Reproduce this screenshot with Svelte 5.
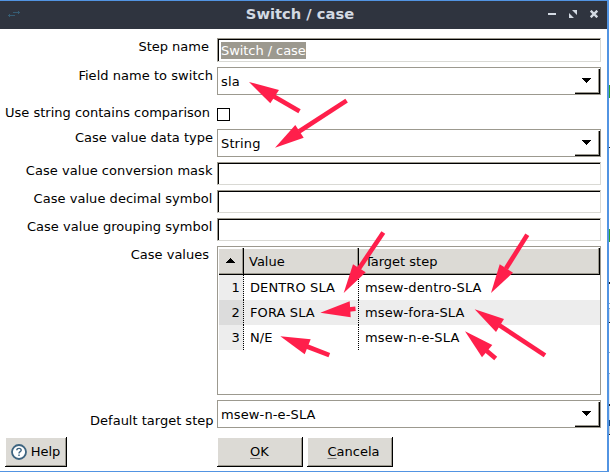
<script>
  const arrows = [
    { head: '249,82 279,90 270.3,103.3', tail: '274,96.5 299.5,111.3' },
    { head: '275,147.7 295.3,125 303.7,137.7', tail: '299,131.5 346.6,100.6' },
    { head: '343.7,293 353,264.3 365.7,272.3', tail: '359,268.5 383.3,232.5' },
    { head: '320.3,312.7 349.7,301.3 350.7,317.3', tail: '349,309.5 355.5,308.8' },
    { head: '280.3,336.3 310.7,339.3 304.7,354.3', tail: '307,346.5 329.3,355.2' },
    { head: '491,293 499.7,264.3 513,272.7', tail: '506,268.5 527.3,234.7' },
    { head: '474.7,309.3 504,319 496,332', tail: '499.5,325.3 545,355.3' },
    { head: '465,331.3 492.3,345 482,357.3', tail: '486.5,350.7 495.7,358.4' }
  ];
  const rows = [
    ['DENTRO SLA', 'msew-dentro-SLA'],
    ['FORA SLA', 'msew-fora-SLA'],
    ['N/E', 'msew-n-e-SLA']
  ];
</script>

{#snippet combo(value)}
  <div class="combo">
    <span>{value}</span>
    <div class="drop"><svg width="9" height="5" shape-rendering="crispEdges"><path d="M0 0h9v1h-1v1h-1v1h-1v1h-1v1h-1v-1h-1v-1h-1v-1h-1v-1h-1z" /></svg></div>
  </div>
{/snippet}

<div class="screen">
  <div class="window">
    <header>
      <svg class="appicon" width="13" height="7" viewBox="0 0 13 7" fill="none" stroke="#365d74"><path d="M5 1.5h7M10.5 0v3M0 4.5h7M1.5 3v3" /></svg>
      <h1>Switch / case</h1>
      <div class="controls">
        <svg width="8" height="8" fill="#d3dae3"><path d="M0 3h8v2H0z" /></svg>
        <svg width="8" height="8" fill="#d3dae3"><path d="M3 0h5v5zM0 3l5 5H0z" /></svg>
        <svg width="8" height="8" stroke="#d3dae3" stroke-width="2.4"><path d="M.7 .7l6.6 6.6M7.3 .7L.7 7.3" /></svg>
      </div>
    </header>
    <main>
      <div class="row name"><span class="label">Step name</span><div class="input"><mark>Switch / case</mark></div></div>
      <div class="row field"><span class="label">Field name to switch</span>{@render combo('sla')}</div>
      <div class="row contains"><span class="label">Use string contains comparison</span><div class="check"></div></div>
      <div class="row type"><span class="label">Case value data type</span>{@render combo('String')}</div>
      <div class="row mask"><span class="label">Case value conversion mask</span><div class="input"></div></div>
      <div class="row symbol"><span class="label">Case value decimal symbol</span><div class="input"></div></div>
      <div class="row symbol"><span class="label">Case value grouping symbol</span><div class="input"></div></div>
      <div class="row values">
        <span class="label">Case values</span>
        <div class="table">
          <div class="thead">
            <div class="th sort"><svg width="9" height="5" shape-rendering="crispEdges"><path d="M4 0h1v1h1v1h1v1h1v1h1v1h-9v-1h1v-1h1v-1h1v-1h1z" /></svg></div>
            <div class="th val">Value</div>
            <div class="th target">Target step</div>
          </div>
          {#each rows as [value, target], i}
            <div class="tr" class:alt={i === 1}>
              <div class="num">{i + 1}</div>
              <div class="value">{value}</div>
              <div class="step">{target}</div>
            </div>
          {/each}
        </div>
      </div>
      <div class="row default"><span class="label">Default target step</span>{@render combo('msew-n-e-SLA')}</div>
      <footer>
        <div class="btn help">
          <svg width="16" height="16" viewBox="0 0 16 16" fill="none" stroke="#3d6480"><circle cx="8" cy="8" r="7" fill="#fff" stroke-width="1.8" /><path d="M5.8 6.2C5.9 3.8 10.2 3.8 10.2 6.2C10.2 7.8 8 7.5 8 9.5M8 10.5v1.5" stroke-width="1.4" /></svg>
          Help
        </div>
        <div class="btn ok"><span><u>O</u>K</span></div>
        <div class="btn cancel"><span><u>C</u>ancela</span></div>
      </footer>
    </main>
  </div>
  <div class="behind"></div>
  <svg class="arrows" width="610" height="472">
    {#each arrows as a}
      <polygon points={a.head} fill="#ff1f4b" />
      <polyline points={a.tail} stroke="#ff1f4b" stroke-width="4.6" fill="none" />
    {/each}
  </svg>
</div>

<style>
  .screen { width: 610px; height: 472px; display: flex; position: relative; overflow: hidden; background: #fff; font: 13px/16px "DejaVu Sans", sans-serif; color: #000; white-space: nowrap; }
  .screen * { box-sizing: border-box; }
  svg { display: block; flex: none; }
  .window { width: 609px; height: 472px; border: solid #5294e2; border-width: 1px 2px 1px 0; }
  header { height: 28px; background: #2f343f; display: flex; align-items: center; padding: 0 9px 0 8px; }
  .appicon { margin-top: -1px; }
  h1 { flex: 1; margin: 0 0 3px 31px; text-align: center; font-size: 14.7px; line-height: 20px; font-weight: bold; color: #d3dae3; }
  .controls { display: flex; gap: 13px; margin-bottom: 2px; }
  main { display: flex; flex-direction: column; padding-top: 9px; }
  .row { display: flex; width: 601px; }
  .label { width: 217px; flex: none; text-align: right; padding-right: 4px; }
  .input { flex: 1; height: 23px; border: 1px solid #d9d9d4; border-top-color: #9c998f; border-left-color: #9c998f; box-shadow: inset 1px 1px #000; display: flex; }
  mark { background: #9c998f; color: #fff; width: 85px; height: 17px; margin: 3px 0 0 3px; line-height: 17px; letter-spacing: -0.06px; }
  .combo { flex: 1; height: 28px; border: 1px solid #9c998f; display: flex; justify-content: space-between; align-items: center; padding: 1px 0 0 3px; letter-spacing: 0.13px; }
  .drop { width: 25px; height: 25px; display: flex; align-items: center; justify-content: center; border: solid #000; border-width: 0 1px 1px 0; box-shadow: inset -1px -1px #9c998f; padding: 0 1px 2px 0; }
  .name .input { height: 24px; }
  .name .label { padding-right: 8px; padding-top: 1px; }
  .field { margin-top: 5px; }
  .field .label { padding-top: 1px; letter-spacing: 0.04px; }
  .contains { margin-top: 10px; align-items: center; height: 19px; }
  .contains .label { padding-right: 7px; margin-bottom: 3px; }
  .check { width: 13px; height: 13px; border: 1px solid #000; }
  .type { margin-top: 5px; }
  .type .label { padding-top: 1px; }
  .mask { margin-top: 5px; }
  .symbol { margin-top: 5px; }
  .mask .label, .symbol .label { padding-right: 4.5px; padding-top: 1px; letter-spacing: 0.04px; }
  .values { margin-top: 5px; }
  .values .label { padding-right: 8px; padding-top: 1px; }
  .table { flex: 1; height: 149px; border: 1px solid #9c998f; padding: 1px 0 0 1px; }
  .thead { height: 27px; display: flex; }
  .th { height: 27px; background: #dcdad5; border: solid #000; border-width: 0 1px 1px 0; box-shadow: inset -1px -1px #9c998f, inset 0 1px #fff; line-height: 27px; padding-left: 5px; }
  .sort { width: 25px; display: flex; align-items: center; padding: 0 0 1px 7px; }
  .val { width: 115px; }
  .target { flex: 1; padding-left: 6px; }
  .tr { display: flex; height: 25px; line-height: 25px; letter-spacing: 0.11px; }
  .num, .value { border-right: 1px dotted #000; }
  .num { width: 25px; background: #ededed; text-align: right; padding-right: 3px; }
  .value { width: 115px; padding-left: 6px; }
  .step { flex: 1; padding-left: 6px; }
  .alt { background: #ededed; }
  .alt .num { background: #dcdcdc; }
  .default { margin-top: 5px; height: 28px; }
  .default .label { padding-top: 13px; padding-right: 3.5px; }
  footer { display: flex; margin-top: 9px; padding-left: 5px; }
  .btn { height: 30px; background: #dcdad5; border: solid #000; border-width: 0 1px 1px 0; box-shadow: inset 1px 1px #fff, inset -1px -1px #9c998f; display: flex; align-items: center; justify-content: center; }
  .help { width: 62px; gap: 4px; }
  .ok { width: 86px; margin-left: 150px; }
  .cancel { width: 86px; margin-left: 4px; padding-left: 8px; }
  u { text-underline-offset: 2px; text-decoration-color: #777; }
  .behind { width: 1px; background: linear-gradient(#fff 85px, #2ca02c 85px 98px, #fff 98px 147px, #222 147px 148px, #fff 148px 229px, #2ca02c 229px 242px, #fff 242px 282px, #222 282px 284px, #fff 284px 303px, #8aa9c4 303px 304px, #fff 304px 308px, #8aa9c4 308px 309px, #dde6ef 309px 322px, #222 322px 323px, #fff 323px 352px, #8aa9c4 352px 353px, #fff 353px 373px, #8aa9c4 373px 374px, #e6eef8 374px 404px, #222 404px 406px, #d5e3f3 406px 420px, #174a85 420px 426px, #c8d2dc 426px 434px, #222 434px 435px, #fff 435px); }
  .arrows { position: absolute; left: 0; top: 0; }
</style>
